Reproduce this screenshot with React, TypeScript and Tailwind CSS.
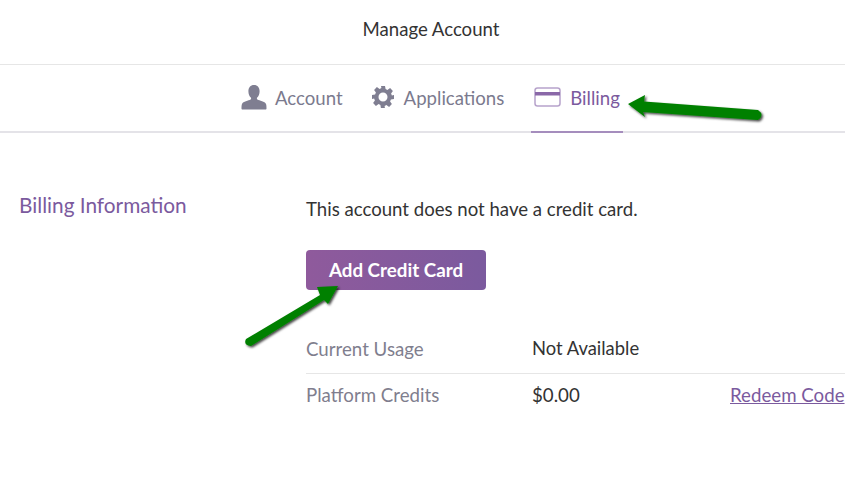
export default function App() {
  return (
    <div className="relative h-[494px] w-[845px] overflow-hidden bg-white text-[#333] [font-family:Lato,'Liberation_Sans',sans-serif]">
      <header className="flex h-[65px] items-center justify-center border-b border-[#e6e6e6] pb-[4px] pl-[17px] text-[18.6px]">
        Manage Account
      </header>
      <nav className="flex h-[68px] items-stretch border-b-2 border-[#e4e3e8] pl-[241px] text-[18.6px] text-[#7b7a8e]">
        <div className="mr-[28px] flex items-center gap-[8px] pt-[2px]">
          <svg className="-mt-[4px]" width="26" height="26" viewBox="0 0 26 26" fill="#7f7e91">
            <path d="M13 1c3.600 0 5.600 2.600 5.600 6.200 0 2.600-1 5-2.400 6.400-.5.600-.4 1.600.3 2 1.800 1 7.500 2 8.500 4.400.5 1.200.5 3.500.5 4.500 0 .6-.4 1-1 1H1.500c-.6 0-1-.4-1-1 0-1 0-3.300.5-4.500 1-2.400 6.700-3.400 8.500-4.400.7-.4.8-1.400.3-2-1.400-1.400-2.400-3.800-2.400-6.400C7.400 3.600 9.400 1 13 1z" />
          </svg>
          <span>Account</span>
        </div>
        <div className="mr-[27px] flex items-center gap-[9px] pt-[2px]">
          <svg className="-mt-[4px]" width="24" height="24" viewBox="0 0 24 24" fill="#7f7e91" fillRule="evenodd">
            <path d="M10 1h4l.6 3.100 1.800.8 2.700-1.800 2.800 2.800-1.800 2.700.8 1.800L23 10v4l-3.100.6-.8 1.800 1.800 2.700-2.800 2.800-2.700-1.800-1.800.8L13.900 23h-4l-.5-3.100-1.800-.8-2.700 1.800-2.800-2.800 1.800-2.700-.8-1.800L1 14v-4l3.100-.6.8-1.800-1.800-2.700 2.800-2.800 2.700 1.800 1.800-.8L10 1zm2 6.500a4.500 4.500 0 1 0 0 9 4.500 4.500 0 0 0 0-9z" />
          </svg>
          <span>Applications</span>
        </div>
        <div className="relative -mb-[2px] flex items-center gap-[9px] border-b-2 border-[#a58dbd] pl-[3px] pr-[3px] pt-[2px] text-[#7b5a9e]">
          <svg className="-mt-[5px]" width="27" height="20" viewBox="0 0 27 20" fill="none">
            <rect x="1" y="1" width="25" height="18" rx="2.500" stroke="#b7a3cb" strokeWidth="1.500" />
            <rect x="1" y="5" width="25" height="3.500" fill="#8a68a8" />
          </svg>
          <span>Billing</span>
        </div>
      </nav>
      <main className="flex pl-[19px] pt-[58px]">
        <h2 className="w-[287px] text-[20.8px] leading-[28px] text-[#7b5a9e]">Billing Information</h2>
        <div className="flex-1 pt-[5px]">
          <p className="text-[18.6px] leading-[26px] text-[#333]">This account does not have a credit card.</p>
          <button className="mt-[28px] flex h-[40px] w-[180px] items-center justify-center rounded-[4px] bg-gradient-to-r from-[#8f5a9c] to-[#7b5a9e] text-[18.8px] font-bold text-white">
            Add Credit Card
          </button>
          <div className="mt-[37px] flex h-[47px] items-center border-b border-[#e6e6e6] pb-[2px] text-[18.7px]">
            <span className="w-[226px] text-[#7f7e8e]">Current Usage</span>
            <span className="text-[18.4px]">Not Available</span>
          </div>
          <div className="flex h-[43px] items-center text-[18.7px]">
            <span className="w-[226px] text-[#7f7e8e]">Platform Credits</span>
            <span className="w-[198px]">$0.00</span>
            <a className="whitespace-nowrap text-[#7b5a9e] underline">Redeem Code</a>
          </div>
        </div>
      </main>
      <svg className="absolute left-0 top-0" width="845" height="494" fill="none">
        <defs>
          <filter id="s" x="-30%" y="-30%" width="160%" height="160%">
            <feDropShadow dx="1.500" dy="1.500" stdDeviation="1.200" floodColor="#000" floodOpacity="0.75" />
          </filter>
        </defs>
        <g filter="url(#s)" fill="#008000">
          <path d="M628 104 L645 95 L644 101.500 L758 110 Q765 115 758 120 L643 112 L645 117 Z" />
          <path d="M246 339 L320 295 L317 287 L338 286 L328 304 L324 300 L251 346 Q243 345 246 339 Z" />
        </g>
      </svg>
    </div>
  );
}
